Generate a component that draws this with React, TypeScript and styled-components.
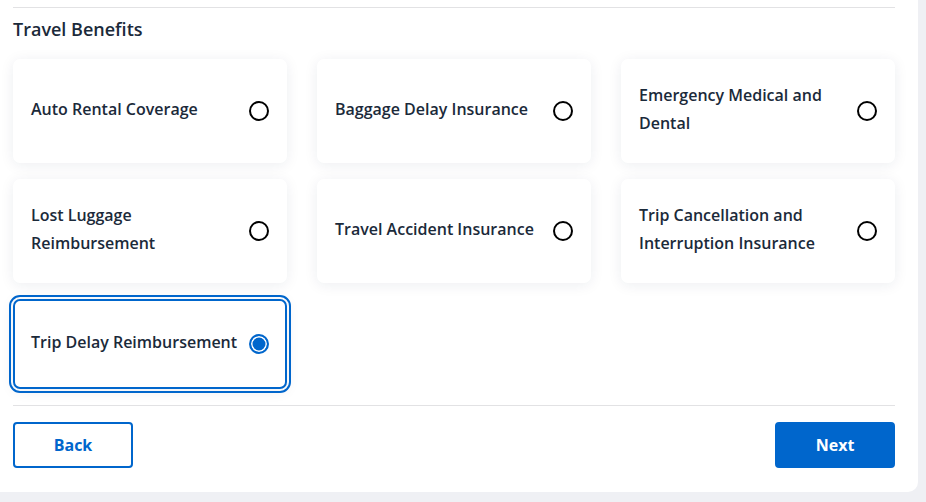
import React, { useState } from 'react';
import styled, { createGlobalStyle } from 'styled-components';

const benefits = [
	'Auto Rental Coverage',
	'Baggage Delay Insurance',
	'Emergency Medical and Dental',
	'Lost Luggage Reimbursement',
	'Travel Accident Insurance',
	'Trip Cancellation and Interruption Insurance',
	'Trip Delay Reimbursement',
];

const blue = '#0066cc';
const ink = '#1b2a3a';

const App = () => {
	const [selected, setSelected] = useState(benefits[6]);

	return (
		<>
			<GlobalStyle />
			<Panel>
				<Divider />
				<Heading>Travel Benefits</Heading>
				<CardGrid>
					{benefits.map(b => (
						<Card
							key={b}
							$active={selected === b}
							onClick={() => setSelected(b)}
						>
							<CardLabel>{b}</CardLabel>
							<Radio $active={selected === b} />
						</Card>
					))}
				</CardGrid>
				<Divider />
				<Footer>
					<BackButton>Back</BackButton>
					<NextButton>Next</NextButton>
				</Footer>
			</Panel>
		</>
	);
};

const GlobalStyle = createGlobalStyle`
	body {
		margin: 0;
		background: #eff0f4;
		font-family: 'Open Sans', 'Noto Sans', sans-serif;
	}
`;

const Panel = styled.div`
	width: 918px;
	box-sizing: border-box;
	background: white;
	border-radius: 0 0 10px 0;
	padding: 7px 23px 24px 13px;
`;

const Divider = styled.div`
	height: 1px;
	background: #e2e2e4;
`;

const Heading = styled.h2`
	margin: 9px 0 18px;
	font-size: 18px;
	line-height: 24px;
	font-weight: 600;
	color: ${ink};
`;

const CardGrid = styled.div`
	display: grid;
	grid-template-columns: repeat(3, 274px);
	column-gap: 30px;
	row-gap: 16px;
	margin-bottom: 16px;
`;

const Card = styled.div<{ $active: boolean }>`
	box-sizing: border-box;
	min-height: 90px;
	display: flex;
	align-items: center;
	gap: 8px;
	padding: 0 16px;
	background: white;
	border-radius: 7px;
	border: 2px solid ${p => (p.$active ? blue : 'transparent')};
	outline: ${p => (p.$active ? `2px solid ${blue}` : 'none')};
	outline-offset: 2px;
	box-shadow: 0 2px 14px rgba(30, 40, 80, 0.08);
	cursor: pointer;

	&:nth-child(-n + 6) {
		min-height: 104px;
	}
`;

const CardLabel = styled.span`
	flex: 1;
	margin-bottom: 4px;
	font-size: 16px;
	line-height: 28px;
	font-weight: 600;
	color: ${ink};
`;

const Radio = styled.span<{ $active: boolean }>`
	flex: none;
	box-sizing: border-box;
	width: 20px;
	height: 20px;
	border-radius: 50%;
	border: 2px solid ${p => (p.$active ? blue : '#000')};
	background: ${p => (p.$active ? blue : 'white')};
	box-shadow: ${p => (p.$active ? 'inset 0 0 0 1.5px white' : 'none')};
`;

const Footer = styled.div`
	display: flex;
	justify-content: space-between;
	margin-top: 16px;
`;

const BackButton = styled.button`
	width: 120px;
	height: 46px;
	border: 2px solid ${blue};
	border-radius: 4px;
	background: white;
	color: ${blue};
	font-family: inherit;
	font-size: 16px;
	font-weight: 700;
	cursor: pointer;
`;

const NextButton = styled(BackButton)`
	background: ${blue};
	color: white;
`;

export default App;
